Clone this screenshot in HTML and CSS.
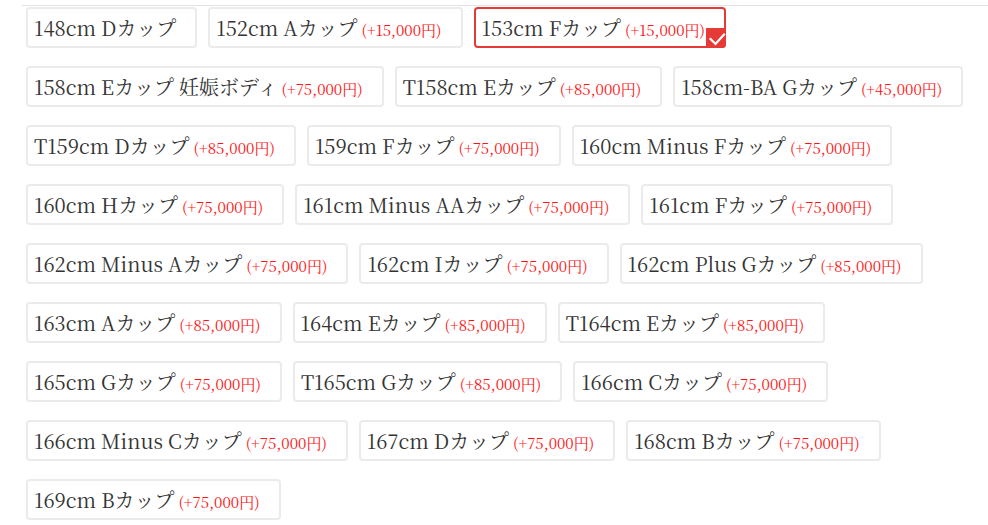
FILE: index.html
```html
<!DOCTYPE html>
<html lang="ja">
<head>
<meta charset="utf-8">
<title>サイズ選択</title>
<link rel="stylesheet" href="styles.css">
</head>
<body>
<div class="panel">
  <div class="options">
    <div class="row">
      <div class="opt"><span class="name">148cm Dカップ</span></div>
      <div class="opt"><span class="name">152cm Aカップ</span><span class="price">(+15,000円)</span></div>
      <div class="opt selected"><span class="name">153cm Fカップ</span><span class="price">(+15,000円)</span>
        <span class="check"><svg viewBox="0 0 20 20" width="20" height="20"><path d="M4.5 11 L9.5 16 L18 6.5" fill="none" stroke="#fff" stroke-width="2.2" stroke-linecap="square"/></svg></span>
      </div>
    </div>
    <div class="row">
      <div class="opt"><span class="name">158cm Eカップ 妊娠ボディ</span><span class="price">(+75,000円)</span></div>
      <div class="opt"><span class="name">T158cm Eカップ</span><span class="price">(+85,000円)</span></div>
      <div class="opt"><span class="name">158cm-BA Gカップ</span><span class="price">(+45,000円)</span></div>
    </div>
    <div class="row">
      <div class="opt"><span class="name">T159cm Dカップ</span><span class="price">(+85,000円)</span></div>
      <div class="opt"><span class="name">159cm Fカップ</span><span class="price">(+75,000円)</span></div>
      <div class="opt"><span class="name">160cm Minus Fカップ</span><span class="price">(+75,000円)</span></div>
    </div>
    <div class="row">
      <div class="opt"><span class="name">160cm Hカップ</span><span class="price">(+75,000円)</span></div>
      <div class="opt"><span class="name">161cm Minus AAカップ</span><span class="price">(+75,000円)</span></div>
      <div class="opt"><span class="name">161cm Fカップ</span><span class="price">(+75,000円)</span></div>
    </div>
    <div class="row">
      <div class="opt"><span class="name">162cm Minus Aカップ</span><span class="price">(+75,000円)</span></div>
      <div class="opt"><span class="name">162cm Iカップ</span><span class="price">(+75,000円)</span></div>
      <div class="opt"><span class="name">162cm Plus Gカップ</span><span class="price">(+85,000円)</span></div>
    </div>
    <div class="row">
      <div class="opt"><span class="name">163cm Aカップ</span><span class="price">(+85,000円)</span></div>
      <div class="opt"><span class="name">164cm Eカップ</span><span class="price">(+85,000円)</span></div>
      <div class="opt"><span class="name">T164cm Eカップ</span><span class="price">(+85,000円)</span></div>
    </div>
    <div class="row">
      <div class="opt"><span class="name">165cm Gカップ</span><span class="price">(+75,000円)</span></div>
      <div class="opt"><span class="name">T165cm Gカップ</span><span class="price">(+85,000円)</span></div>
      <div class="opt"><span class="name">166cm Cカップ</span><span class="price">(+75,000円)</span></div>
    </div>
    <div class="row">
      <div class="opt"><span class="name">166cm Minus Cカップ</span><span class="price">(+75,000円)</span></div>
      <div class="opt"><span class="name">167cm Dカップ</span><span class="price">(+75,000円)</span></div>
      <div class="opt"><span class="name">168cm Bカップ</span><span class="price">(+75,000円)</span></div>
    </div>
    <div class="row">
      <div class="opt"><span class="name">169cm Bカップ</span><span class="price">(+75,000円)</span></div>
    </div>
  </div>
</div>
</body>
</html>
```

FILE: styles.css
```css
html, body {
  margin: 0;
  padding: 0;
  background: #fff;
}

.panel {
  margin: 5px 0 0 22px;
  border-top: 1px solid #e3e3e3;
}

.options {
  display: flex;
  flex-direction: column;
  gap: 18px;
  padding: 1px 0 0 4px;
}

.row {
  display: flex;
  gap: 11px;
}

.opt {
  position: relative;
  box-sizing: border-box;
  height: 41px;
  display: flex;
  align-items: baseline;
  padding: 0 19px 0 6px;
  border: 2px solid #ebebeb;
  border-radius: 4px;
  background: #fff;
  line-height: 37px;
  white-space: nowrap;
}

.opt.selected {
  border-color: #e53a36;
}

.name {
  font-family: "Noto Serif CJK JP", "Noto Serif", "Liberation Serif", serif;
  font-size: 20px;
  color: #333;
}

.price {
  margin-left: 4px;
  font-family: "Noto Serif CJK JP", "Noto Serif", "Liberation Serif", serif;
  font-size: 15px;
  color: #ff1414;
}

.check {
  position: absolute;
  right: -2px;
  bottom: -2px;
  width: 20px;
  height: 20px;
  background: #e53a36;
  border-radius: 0 0 4px 0;
  display: flex;
}
```
